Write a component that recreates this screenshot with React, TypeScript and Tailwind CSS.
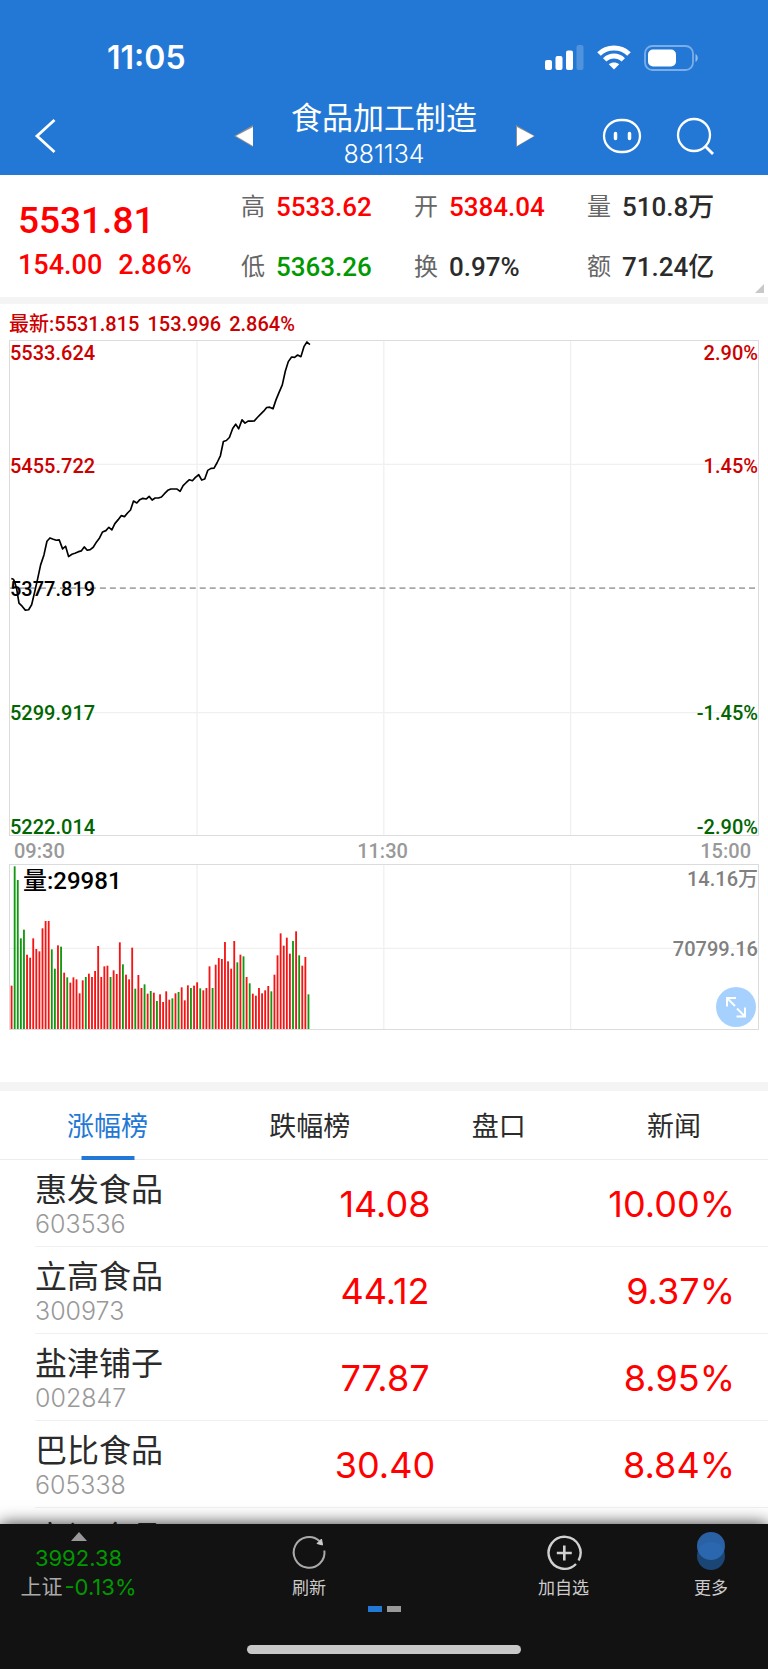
import React, { useState } from 'react';

const quoteStats = [
  { label: '高', value: '5533.62', color: 'text-[#ff0000]' },
  { label: '开', value: '5384.04', color: 'text-[#ff0000]' },
  { label: '量', value: '510.8万', color: 'text-[#2b2b2b]' },
  { label: '低', value: '5363.26', color: 'text-[#009900]' },
  { label: '换', value: '0.97%', color: 'text-[#2b2b2b]' },
  { label: '额', value: '71.24亿', color: 'text-[#2b2b2b]' },
];

const priceLabels = [
  { text: '5533.624', place: 'left-0 top-0', color: 'text-[#cc0000]' },
  { text: '5455.722', place: 'left-0 top-1/4 -translate-y-1/2', color: 'text-[#cc0000]' },
  { text: '5377.819', place: 'left-0 top-1/2 -translate-y-1/2', color: 'text-black' },
  { text: '5299.917', place: 'left-0 top-3/4 -translate-y-1/2', color: 'text-[#006600]' },
  { text: '5222.014', place: 'left-0 -bottom-0.5', color: 'text-[#006600]' },
  { text: '2.90%', place: 'right-0 top-0', color: 'text-[#cc0000]' },
  { text: '1.45%', place: 'right-0 top-1/4 -translate-y-1/2', color: 'text-[#cc0000]' },
  { text: '-1.45%', place: 'right-0 top-3/4 -translate-y-1/2', color: 'text-[#006600]' },
  { text: '-2.90%', place: 'right-0 -bottom-0.5', color: 'text-[#006600]' },
];

const pricePoints =
  '4,714 10,716 14,724 20,745 27,788 37,798 46,809 56,808 65,793 74,755 83,715 92,673 102,643 111,602 120,592 130,596 139,599 148,598 158,625 167,617 176,648 186,641 195,638 204,634 214,631 223,619 232,629 241,627 250,620 260,604 269,592 278,574 288,570 297,560 306,568 315,549 325,537 334,525 344,528 353,517 362,508 371,481 381,487 390,477 399,473 409,475 418,467 427,478 436,472 446,472 455,469 464,459 474,449 483,445 492,445 502,445 511,452 520,435 529,426 539,417 548,420 557,410 567,402 576,418 585,415 594,389 604,383 613,382 622,366 632,345 641,302 650,299 659,290 669,263 678,250 687,264 697,237 706,247 715,241 725,241 734,240 743,230 753,220 762,211 771,200 780,199 790,204 799,177 808,155 818,132 827,91 836,62 846,48 855,49 864,42 874,47 883,17 892,3 901,11';

// one bar per minute, negative = falling
const volumes = [
  130, -488, -447, -272, -298, 223, 214, 272, 240, 233, 302, 324, 324, -239, -181, 251, -247, 169, -155, 139,
  155, 149, 107, 146, -156, 166, 156, 174, 249, 156, 188, 190, -156, 176, 165, 260, -194, 163, 149, 244,
  -121, 162, 123, -134, 106, -114, 109, -84, 104, 81, 113, 88, -92, 107, -111, 125, 86, 131, -123, 130,
  140, -122, 116, 123, 188, -123, 193, 213, 210, 261, 203, 181, 264, -200, 223, -218, 156, -137, 106, 100,
  123, 107, 116, 129, -113, 163, 221, 287, 250, 274, 226, -264, 293, -221, 190, 216, -104,
];

const tabs = ['涨幅榜', '跌幅榜', '盘口', '新闻'];

const stocks = [
  { name: '惠发食品', code: '603536', price: '14.08', change: '10.00%' },
  { name: '立高食品', code: '300973', price: '44.12', change: '9.37%' },
  { name: '盐津铺子', code: '002847', price: '77.87', change: '8.95%' },
  { name: '巴比食品', code: '605338', price: '30.40', change: '8.84%' },
];

const StatusBar: React.FC = () => (
  <div className="flex h-[92px] items-center justify-between pl-[107px] pr-[69px] pt-[23px]">
    <span className="text-[32px] leading-9 font-semibold">11:05</span>
    <div className="flex items-center gap-[13px]">
      <svg width="39" height="25" viewBox="0 0 39 25" fill="currentColor">
        <rect x="0" y="15" width="7" height="10" rx="2" />
        <rect x="10.500" y="11" width="7" height="14" rx="2" />
        <rect x="21" y="5.500" width="7" height="19.500" rx="2" />
        <rect x="31.500" y="0" width="7" height="25" rx="2" opacity="0.2" />
      </svg>
      <svg width="34" height="25" viewBox="0 0 34 25" fill="none" stroke="currentColor">
        <path d="M2 9 C10 1 24 1 32 9" strokeWidth="5" />
        <path d="M7.700 14.900 C13 9.700 21 9.700 26.300 14.900" strokeWidth="4.800" />
        <path d="M17 24.500 L11.800 19.300 C14.800 16.800 19.200 16.800 22.200 19.300 Z" fill="currentColor" stroke="none" />
      </svg>
      <svg width="55" height="26" viewBox="0 0 55 26" fill="none">
        <rect x="1" y="1" width="48" height="24" rx="7.500" stroke="#fff" strokeOpacity="0.4" strokeWidth="1.800" />
        <rect x="4" y="4.500" width="28" height="17" rx="5" fill="#fff" />
        <path d="M51.500 9 C54.500 10.500 54.500 15.500 51.500 17 Z" fill="#fff" fillOpacity="0.5" />
      </svg>
    </div>
  </div>
);

const Header: React.FC = () => (
  <header className="shrink-0 bg-[#2478d5] text-white">
    <StatusBar />
    <div className="grid h-[83px] grid-cols-[1fr_auto_1fr] items-center pt-1">
      <button aria-label="返回" className="ml-[33px] justify-self-start">
        <svg width="24" height="38" viewBox="0 0 24 38" fill="none" stroke="currentColor" strokeWidth="2.800">
          <path d="M21.500 3 L4 19 L21.500 35" />
        </svg>
      </button>
      <div className="flex w-[302px] items-center justify-between">
        <button aria-label="上一个">
          <svg width="20" height="24" viewBox="0 0 20 24">
            <path d="M20 1 L1 12 L20 23 Z" fill="#8f8f8f" />
            <path d="M20 3 L3 12 L20 22 Z" fill="#fff" />
          </svg>
        </button>
        <div className="flex flex-col items-center">
          <h1 className="text-[31px] leading-9">食品加工制造</h1>
          <p className="text-[25px] leading-9 font-light">881134</p>
        </div>
        <button aria-label="下一个">
          <svg width="20" height="24" viewBox="0 0 20 24">
            <path d="M1 1 L20 12 L1 23 Z" fill="#8f8f8f" />
            <path d="M2 3 L19 12 L2 22 Z" fill="#fff" />
          </svg>
        </button>
      </div>
      <div className="mr-[54px] flex items-center gap-[34px] justify-self-end">
        <button aria-label="客服">
          <svg width="40" height="36" viewBox="0 0 40 36" fill="none" stroke="currentColor">
            <rect x="2" y="2" width="36" height="32" rx="17" strokeWidth="2.300" />
            <path d="M13.500 15.500 V20.500 M27.500 15.500 V20.500" strokeWidth="3.500" strokeLinecap="round" />
          </svg>
        </button>
        <button aria-label="搜索">
          <svg width="38" height="38" viewBox="0 0 38 38" fill="none" stroke="currentColor" strokeWidth="2.300">
            <circle cx="18" cy="18" r="16" />
            <path d="M29 29 L37 37" strokeWidth="2.800" />
          </svg>
        </button>
      </div>
    </div>
  </header>
);

const Quote: React.FC = () => (
  <section className="relative flex h-[122px] font-[Roboto,'Noto_Sans_CJK_SC',sans-serif] font-medium">
    <div className="w-[241px] shrink-0 pt-6 pl-[18px] text-[#ff0000]">
      <div className="text-[37px] leading-[44px]">5531.81</div>
      <div className="flex gap-4 text-[27px] leading-[44px]">
        <span>154.00</span>
        <span>2.86%</span>
      </div>
    </div>
    <dl className="grid flex-1 grid-cols-3 grid-rows-2 pt-0.5 pr-2">
      {quoteStats.map(stat => (
        <div key={stat.label} className="flex items-center gap-[11px]">
          <dt className="text-2xl font-normal text-[#666]">{stat.label}</dt>
          <dd className={`text-[26px] ${stat.color}`}>{stat.value}</dd>
        </div>
      ))}
    </dl>
    <svg className="absolute right-1 bottom-1" width="9" height="9" viewBox="0 0 9 9">
      <path d="M9 0 V9 H0 Z" fill="#c8c8c8" />
    </svg>
  </section>
);

const Chart: React.FC = () => (
  <section className="border-t-[7px] border-[#f4f4f4] px-[9px] pb-[52px] font-[Roboto,'Noto_Sans_CJK_SC',sans-serif] text-xl font-medium">
    <div className="flex h-9 items-center gap-2 pt-1 text-[#cc0000]">
      <span>最新:5531.815</span>
      <span>153.996</span>
      <span>2.864%</span>
    </div>

    <div className="relative h-[496px] border border-[#dcdcdc] leading-5">
      <svg className="absolute inset-0 h-full w-full" viewBox="0 0 2247 1485" preserveAspectRatio="none" fill="none">
        <path d="M562 0 V1485 M1123 0 V1485 M1684 0 V1485 M0 371 H2247 M0 1117 H2247" stroke="#f0f0f0" strokeWidth="4" />
        <path d="M0 743 H2247" stroke="#a8a8a8" strokeWidth="5" strokeDasharray="18 12" />
      </svg>
      {priceLabels.map(label => (
        <span key={label.text} className={`absolute pt-0.5 ${label.place} ${label.color}`}>
          {label.text}
        </span>
      ))}
      <svg className="absolute inset-0 h-full w-full" viewBox="0 0 2247 1485" preserveAspectRatio="none" fill="none">
        <polyline points={pricePoints} stroke="#000" strokeWidth="5" strokeLinejoin="round" />
      </svg>
    </div>

    <div className="flex h-7 items-center justify-between pt-0.5 pr-2 pl-[5px] text-[#999]">
      <span>09:30</span>
      <span>11:30</span>
      <span>15:00</span>
    </div>

    <div className="relative h-[166px] border border-[#dcdcdc] leading-6">
      <svg className="absolute inset-0 h-full w-full" viewBox="0 0 2247 492" preserveAspectRatio="none">
        <path d="M562 0 V492 M1123 0 V492 M1684 0 V492 M0 250 H2247" stroke="#f0f0f0" strokeWidth="4" />
        {volumes.map((v, i) => (
          <rect
            key={i}
            x={2 + i * 9.29}
            y={492 - Math.abs(v)}
            width="5.500"
            height={Math.abs(v)}
            fill={v < 0 ? '#109910' : '#f51414'}
          />
        ))}
      </svg>
      <span className="absolute top-1 left-[13px] text-2xl leading-6 text-black">量:29981</span>
      <span className="absolute top-0.5 right-0 text-[#808080]">14.16万</span>
      <span className="absolute top-1/2 right-0 -translate-y-1/2 pt-1 text-[#808080]">70799.16</span>
      <button
        aria-label="全屏"
        className="absolute right-0.5 bottom-0.5 flex size-10 items-center justify-center rounded-full bg-[#a6d1ff] text-white"
      >
        <svg width="22" height="22" viewBox="0 0 22 22" fill="none" stroke="currentColor" strokeWidth="1.900">
          <path d="M2 10.500 V2 H11 M2 2 L10 10 M12 12.500 L20 20.500 M20 11.500 V20.500 H11.500" />
        </svg>
      </button>
    </div>
  </section>
);

const Ranking: React.FC = () => {
  const [active, setActive] = useState('涨幅榜');

  return (
    <section className="border-t-[9px] border-[#f4f4f4]">
      <div role="tablist" className="flex justify-between border-b border-[#ececec] px-[67px]">
        {tabs.map(tab => (
          <button
            key={tab}
            role="tab"
            aria-selected={tab === active}
            onClick={() => setActive(tab)}
            className={`relative h-[68px] pt-1 text-[27px] ${tab === active ? 'text-[#2478d5]' : 'text-[#2b2b2b]'}`}
          >
            {tab}
            {tab === active && (
              <span className="absolute -bottom-px left-1/2 h-1 w-[53px] -translate-x-1/2 bg-[#2478d5]" />
            )}
          </button>
        ))}
      </div>
      <ul className="pl-[35px]">
        {stocks.map(stock => (
          <li
            key={stock.code}
            className="grid h-[87px] grid-cols-3 items-center border-b border-[#f0f0f0] pt-0.5 pr-[33px]"
          >
            <div>
              <div className="text-[32px] leading-10 text-[#2b2b2b]">{stock.name}</div>
              <div className="text-[25px] leading-7 font-light text-[#999]">{stock.code}</div>
            </div>
            <div className="text-center text-[36px] text-[#ff0000]">{stock.price}</div>
            <div className="text-right text-[36px] text-[#ff0000]">{stock.change}</div>
          </li>
        ))}
        <li className="pt-2.5 text-[32px] leading-10 text-[#2b2b2b]">安记食品</li>
      </ul>
    </section>
  );
};

const BottomBar: React.FC = () => (
  <nav className="relative h-[145px] shrink-0 bg-[#121212] text-[#ccc] shadow-[0_0_16px_rgba(0,0,0,0.8)]">
    <div className="grid h-[79px] grid-cols-[157px_304px_1fr_90px] pt-2 pr-3 text-[17px] leading-6">
      <button className="flex flex-col items-center">
        <svg width="16" height="9" viewBox="0 0 16 9">
          <path d="M8 0 L16 9 H0 Z" fill="#999" />
        </svg>
        <span className="text-[22px] leading-[34px] text-[#009900]">3992.38</span>
        <span className="flex items-center gap-0.5 text-[21px] leading-6 text-[#aaa]">
          上证<span className="text-[22px] leading-6 text-[#009900]">-0.13%</span>
        </span>
      </button>
      <button className="flex flex-col items-center gap-1">
        <svg width="40" height="40" viewBox="0 0 40 40" fill="none" stroke="#aaa" strokeWidth="2">
          <path d="M35.400 18.500 A15.400 15.400 0 1 1 30.500 9" />
          <path d="M32.500 7 L33.500 13 L28 11.500 Z" fill="#ccc" stroke="#ccc" strokeWidth="1" />
        </svg>
        <span>刷新</span>
      </button>
      <button className="flex flex-col items-center gap-1">
        <svg width="40" height="40" viewBox="0 0 40 40" fill="none" stroke="#d0d0d0">
          <path d="M32 32 A16 16 0 1 1 34.600 28.500" strokeWidth="2.400" />
          <path d="M20.300 13.500 V28.500 M12.800 21 H27.800" strokeWidth="2.600" />
        </svg>
        <span>加自选</span>
      </button>
      <button className="flex flex-col items-center gap-1">
        <svg width="40" height="40" viewBox="0 0 40 40">
          <circle cx="20" cy="24" r="14" fill="#2478d5" opacity="0.500" />
          <circle cx="20" cy="14" r="14" fill="#2d6ab5" opacity="0.900" />
        </svg>
        <span>更多</span>
      </button>
    </div>
    <div className="mt-[3px] flex justify-center gap-[5px]">
      <span className="h-1.5 w-[14px] bg-[#2478d5]" />
      <span className="h-1.5 w-[14px] bg-[#999]" />
    </div>
    <div className="mx-auto mt-[33px] h-[9px] w-[274px] rounded-full bg-[#c8c8c8]" />
  </nav>
);

const App: React.FC = () => {
  return (
    <div className="flex h-screen flex-col bg-white font-[Inter,'Noto_Sans_CJK_SC',sans-serif]">
      <Header />
      <main className="min-h-0 flex-1 overflow-y-auto [scrollbar-width:none]">
        <Quote />
        <Chart />
        <Ranking />
      </main>
      <BottomBar />
    </div>
  );
};

export default App;
